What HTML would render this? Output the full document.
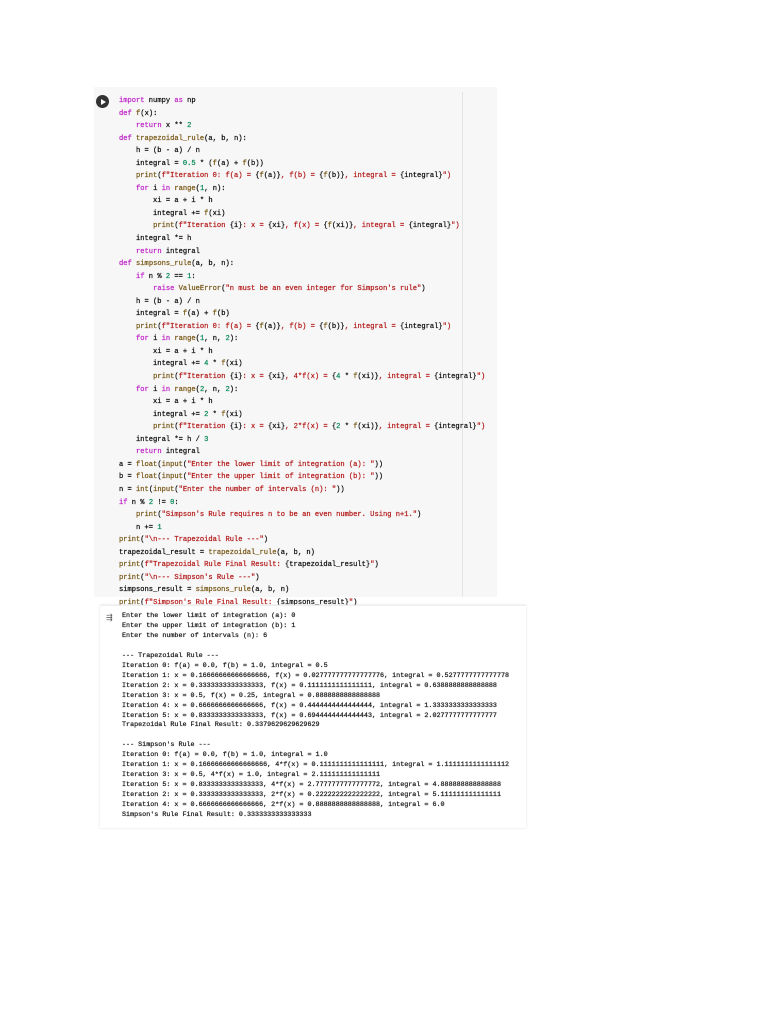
<!DOCTYPE html>
<html><head><meta charset="utf-8"><style>
body{margin:0;background:#fff;width:768px;height:1024px;position:relative;overflow:hidden}
.cell{position:absolute;left:94px;top:87px;width:403px;height:510px;background:#f7f7f7}
.ruler{position:absolute;left:462px;top:92px;width:1px;height:505px;background:#e4e4e4}
pre{margin:0;font-family:"Liberation Mono",monospace;white-space:pre;-webkit-text-stroke:0.25px currentColor}
.code{position:absolute;left:119px;top:95px;font-size:7.1px;line-height:12.54px;color:#111}
.k{color:#c028c8}.f{color:#7a5a1a}.s{color:#b52020}.n{color:#0a8a58}
.run{position:absolute;left:96px;top:95px;width:13px;height:13px;border-radius:50%;background:#333}
.run:after{content:"";position:absolute;left:5px;top:3.5px;border-left:5px solid #fff;border-top:3px solid transparent;border-bottom:3px solid transparent}
.out{position:absolute;left:100px;top:605px;width:426px;height:222px;background:#fff;box-shadow:0 0 2px #ddd;border-top:1px solid #eee}
.otext{position:absolute;left:122px;top:612px;font-size:6.72px;line-height:9.95px;color:#222}
.oicon{position:absolute;left:106px;top:613px;font-size:8px;color:#555;font-family:"DejaVu Sans",sans-serif}
</style></head><body>
<div class="cell"></div><div class="ruler"></div>
<div class="run"></div>
<pre class="code"><span class="k">import</span> numpy <span class="k">as</span> np
<span class="k">def</span> <span class="f">f</span>(x):
    <span class="k">return</span> x ** <span class="n">2</span>
<span class="k">def</span> <span class="f">trapezoidal_rule</span>(a, b, n):
    h = (b - a) / n
    integral = <span class="n">0.5</span> * (<span class="f">f</span>(a) + <span class="f">f</span>(b))
    <span class="f">print</span>(<span class="s">f"Iteration 0: f(a) = </span>{<span class="f">f</span>(a)}<span class="s">, f(b) = </span>{<span class="f">f</span>(b)}<span class="s">, integral = </span>{integral}<span class="s">")</span>
    <span class="k">for</span> i <span class="k">in</span> <span class="f">range</span>(<span class="n">1</span>, n):
        xi = a + i * h
        integral += <span class="f">f</span>(xi)
        <span class="f">print</span>(<span class="s">f"Iteration </span>{i}<span class="s">: x = </span>{xi}<span class="s">, f(x) = </span>{<span class="f">f</span>(xi)}<span class="s">, integral = </span>{integral}<span class="s">")</span>
    integral *= h
    <span class="k">return</span> integral
<span class="k">def</span> <span class="f">simpsons_rule</span>(a, b, n):
    <span class="k">if</span> n % <span class="n">2</span> == <span class="n">1</span>:
        <span class="k">raise</span> <span class="f">ValueError</span>(<span class="s">"n must be an even integer for Simpson's rule"</span>)
    h = (b - a) / n
    integral = <span class="f">f</span>(a) + <span class="f">f</span>(b)
    <span class="f">print</span>(<span class="s">f"Iteration 0: f(a) = </span>{<span class="f">f</span>(a)}<span class="s">, f(b) = </span>{<span class="f">f</span>(b)}<span class="s">, integral = </span>{integral}<span class="s">")</span>
    <span class="k">for</span> i <span class="k">in</span> <span class="f">range</span>(<span class="n">1</span>, n, <span class="n">2</span>):
        xi = a + i * h
        integral += <span class="n">4</span> * <span class="f">f</span>(xi)
        <span class="f">print</span>(<span class="s">f"Iteration </span>{i}<span class="s">: x = </span>{xi}<span class="s">, 4*f(x) = </span>{<span class="n">4</span> * <span class="f">f</span>(xi)}<span class="s">, integral = </span>{integral}<span class="s">")</span>
    <span class="k">for</span> i <span class="k">in</span> <span class="f">range</span>(<span class="n">2</span>, n, <span class="n">2</span>):
        xi = a + i * h
        integral += <span class="n">2</span> * <span class="f">f</span>(xi)
        <span class="f">print</span>(<span class="s">f"Iteration </span>{i}<span class="s">: x = </span>{xi}<span class="s">, 2*f(x) = </span>{<span class="n">2</span> * <span class="f">f</span>(xi)}<span class="s">, integral = </span>{integral}<span class="s">")</span>
    integral *= h / <span class="n">3</span>
    <span class="k">return</span> integral
a = <span class="f">float</span>(<span class="f">input</span>(<span class="s">"Enter the lower limit of integration (a): "</span>))
b = <span class="f">float</span>(<span class="f">input</span>(<span class="s">"Enter the upper limit of integration (b): "</span>))
n = <span class="f">int</span>(<span class="f">input</span>(<span class="s">"Enter the number of intervals (n): "</span>))
<span class="k">if</span> n % <span class="n">2</span> != <span class="n">0</span>:
    <span class="f">print</span>(<span class="s">"Simpson's Rule requires n to be an even number. Using n+1."</span>)
    n += <span class="n">1</span>
<span class="f">print</span>(<span class="s">"\n--- Trapezoidal Rule ---"</span>)
trapezoidal_result = <span class="f">trapezoidal_rule</span>(a, b, n)
<span class="f">print</span>(<span class="s">f"Trapezoidal Rule Final Result: </span>{trapezoidal_result}<span class="s">"</span>)
<span class="f">print</span>(<span class="s">"\n--- Simpson's Rule ---"</span>)
simpsons_result = <span class="f">simpsons_rule</span>(a, b, n)
<span class="f">print</span>(<span class="s">f"Simpson's Rule Final Result: </span>{simpsons_result}<span class="s">"</span>)</pre>
<div class="out"></div>
<div class="oicon">⇶</div>
<pre class="otext">Enter the lower limit of integration (a): 0
Enter the upper limit of integration (b): 1
Enter the number of intervals (n): 6

--- Trapezoidal Rule ---
Iteration 0: f(a) = 0.0, f(b) = 1.0, integral = 0.5
Iteration 1: x = 0.16666666666666666, f(x) = 0.027777777777777776, integral = 0.5277777777777778
Iteration 2: x = 0.3333333333333333, f(x) = 0.1111111111111111, integral = 0.6388888888888888
Iteration 3: x = 0.5, f(x) = 0.25, integral = 0.8888888888888888
Iteration 4: x = 0.6666666666666666, f(x) = 0.4444444444444444, integral = 1.3333333333333333
Iteration 5: x = 0.8333333333333333, f(x) = 0.6944444444444443, integral = 2.0277777777777777
Trapezoidal Rule Final Result: 0.3379629629629629

--- Simpson's Rule ---
Iteration 0: f(a) = 0.0, f(b) = 1.0, integral = 1.0
Iteration 1: x = 0.16666666666666666, 4*f(x) = 0.1111111111111111, integral = 1.1111111111111112
Iteration 3: x = 0.5, 4*f(x) = 1.0, integral = 2.111111111111111
Iteration 5: x = 0.8333333333333333, 4*f(x) = 2.7777777777777772, integral = 4.888888888888888
Iteration 2: x = 0.3333333333333333, 2*f(x) = 0.2222222222222222, integral = 5.111111111111111
Iteration 4: x = 0.6666666666666666, 2*f(x) = 0.8888888888888888, integral = 6.0
Simpson's Rule Final Result: 0.3333333333333333</pre>
</body></html>
